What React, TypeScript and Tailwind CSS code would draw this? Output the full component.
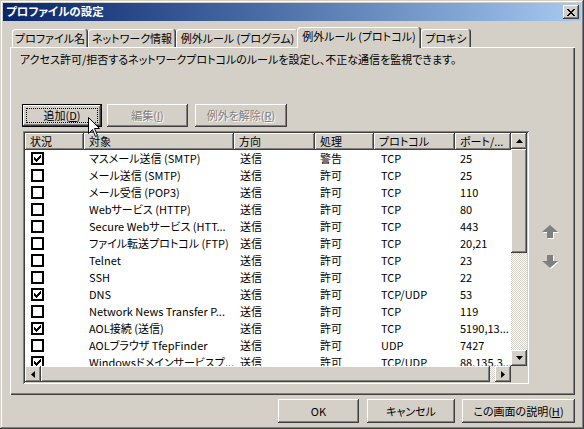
import React from 'react';

const raised =
  'shadow-[inset_-1px_-1px_0_#404040,inset_1px_1px_0_#ffffff,inset_-2px_-2px_0_#808080,inset_2px_2px_0_#d4d0c8]';
const headerCell = 'shadow-[inset_-1px_-1px_0_#404040,inset_1px_1px_0_#ffffff,inset_-2px_-2px_0_#808080]';
const sunken =
  'shadow-[inset_1px_1px_0_#808080,inset_-1px_-1px_0_#ffffff,inset_2px_2px_0_#404040,inset_-2px_-2px_0_#d4d0c8]';
const dither = 'bg-[repeating-conic-gradient(#ffffff_0_25%,#d4d0c8_0_50%)] bg-[length:2px_2px]';
const disabled = 'text-[#808080] [text-shadow:1px_1px_0_#ffffff]';
const tabShadow = 'shadow-[inset_-1px_0_0_#404040,inset_1px_1px_0_#ffffff,inset_-2px_0_0_#808080]';

type Row = { on: boolean; name: string; dir: string; act: string; proto: string; port: string };

const rows: Row[] = [
  { on: true, name: 'マスメール送信 (SMTP)', dir: '送信', act: '警告', proto: 'TCP', port: '25' },
  { on: false, name: 'メール送信 (SMTP)', dir: '送信', act: '許可', proto: 'TCP', port: '25' },
  { on: false, name: 'メール受信 (POP3)', dir: '送信', act: '許可', proto: 'TCP', port: '110' },
  { on: false, name: 'Webサービス (HTTP)', dir: '送信', act: '許可', proto: 'TCP', port: '80' },
  { on: false, name: 'Secure Webサービス (HTT...', dir: '送信', act: '許可', proto: 'TCP', port: '443' },
  { on: false, name: 'ファイル転送プロトコル (FTP)', dir: '送信', act: '許可', proto: 'TCP', port: '20,21' },
  { on: false, name: 'Telnet', dir: '送信', act: '許可', proto: 'TCP', port: '23' },
  { on: false, name: 'SSH', dir: '送信', act: '許可', proto: 'TCP', port: '22' },
  { on: true, name: 'DNS', dir: '送信', act: '許可', proto: 'TCP/UDP', port: '53' },
  { on: false, name: 'Network News Transfer P...', dir: '送信', act: '許可', proto: 'TCP', port: '119' },
  { on: true, name: 'AOL接続 (送信)', dir: '送信', act: '許可', proto: 'TCP', port: '5190,13...' },
  { on: false, name: 'AOLブラウザ TfepFinder', dir: '送信', act: '許可', proto: 'UDP', port: '7427' },
  { on: true, name: 'Windowsドメインサービスプ...', dir: '送信', act: '許可', proto: 'TCP/UDP', port: '88,135,3...' },
];

const cols = [
  { label: '状況', w: 'w-[59px]' },
  { label: '対象', w: 'w-[150px]' },
  { label: '方向', w: 'w-[81px]' },
  { label: '処理', w: 'w-[59px]' },
  { label: 'プロトコル', w: 'w-[81px]' },
  { label: 'ポート/...', w: 'w-[56px]' },
];

function Check({ on }: { on: boolean }) {
  return (
    <div className="w-[13px] h-[13px] border-2 border-black bg-white flex items-center justify-center">
      {on && (
        <svg width="7" height="7" viewBox="0 0 7 7" shapeRendering="crispEdges">
          <rect x="0" y="2" width="1" height="3" fill="#000" />
          <rect x="1" y="3" width="1" height="3" fill="#000" />
          <rect x="2" y="4" width="1" height="3" fill="#000" />
          <rect x="3" y="3" width="1" height="3" fill="#000" />
          <rect x="4" y="2" width="1" height="3" fill="#000" />
          <rect x="5" y="1" width="1" height="3" fill="#000" />
          <rect x="6" y="0" width="1" height="3" fill="#000" />
        </svg>
      )}
    </div>
  );
}

function Arrow({ dir }: { dir: 'up' | 'down' | 'left' | 'right' }) {
  const pts = {
    up: '0,4 3.5,0 7,4',
    down: '0,0 3.5,4 7,0',
    left: '4,0 0,3.5 4,7',
    right: '0,0 4,3.5 0,7',
  }[dir];
  const vertical = dir === 'up' || dir === 'down';
  return (
    <svg width={vertical ? 7 : 4} height={vertical ? 4 : 7} viewBox={vertical ? '0 0 7 4' : '0 0 4 7'}>
      <polygon points={pts} fill="#000" />
    </svg>
  );
}

function ScrollBtn({ dir }: { dir: 'up' | 'down' | 'left' | 'right' }) {
  return (
    <div className={`w-[16px] h-[16px] shrink-0 bg-[#d4d0c8] flex items-center justify-center ${raised}`}>
      <Arrow dir={dir} />
    </div>
  );
}

function Button({
  children,
  w,
  off,
  focused,
}: {
  children: React.ReactNode;
  w: string;
  off?: boolean;
  focused?: boolean;
}) {
  if (focused) {
    return (
      <div className={`${w} h-full border border-black`}>
        <div className={`w-full h-full bg-[#d4d0c8] p-[3px] ${raised}`}>
          <div className="w-full h-full border border-dotted border-black flex items-center justify-center">
            {children}
          </div>
        </div>
      </div>
    );
  }
  return (
    <div className={`${w} h-full bg-[#d4d0c8] flex items-center justify-center ${raised} ${off ? disabled : ''}`}>
      {children}
    </div>
  );
}

function MoveArrow({ up }: { up: boolean }) {
  const pts = up ? '8,0 16,7 11,7 11,13 5,13 5,7 0,7' : '5,0 11,0 11,6 16,6 8,13 0,6 5,6';
  return (
    <svg width="18" height="15" viewBox="0 0 18 15">
      <polygon points={pts} fill="#ffffff" transform="translate(1 1)" />
      <polygon points={pts} fill="#808080" />
    </svg>
  );
}

export default function App() {
  return (
    <div
      className={`relative w-[584px] h-[429px] overflow-hidden bg-[#d4d0c8] p-[3px] text-[11px] text-black font-['Noto_Sans_CJK_JP','Noto_Sans',sans-serif] [font-feature-settings:'palt'] shadow-[inset_-1px_-1px_0_#404040,inset_1px_1px_0_#d4d0c8,inset_-2px_-2px_0_#808080,inset_2px_2px_0_#ffffff]`}
    >
      {/* title bar */}
      <div className="h-[18px] flex items-center bg-linear-to-r from-[#0a246a] to-[#a6caf0] pl-[3px] pr-[2px]">
        <span className="text-white font-bold text-[11.5px] leading-none">プロファイルの設定</span>
        <div className={`ml-auto w-[16px] h-[14px] bg-[#d4d0c8] flex items-center justify-center ${raised}`}>
          <svg width="8" height="7" viewBox="0 0 8 7" shapeRendering="crispEdges">
            <path d="M0 0h2v1h-2zM6 0h2v1h-2zM1 1h2v1h-2zM5 1h2v1h-2zM2 2h4v1h-4zM3 3h2v1h-2zM2 4h4v1h-4zM1 5h2v1h-2zM5 5h2v1h-2zM0 6h2v1h-2zM6 6h2v1h-2z" fill="#000" />
          </svg>
        </div>
      </div>

      <div className="px-[7px]">
        {/* tabs */}
        <div className="mt-[6px] h-[20px] flex items-end pl-[2px]">
          {[
            { label: 'プロファイル名', w: 'w-[76px]' },
            { label: 'ネットワーク情報', w: 'w-[88px]' },
            { label: '例外ルール (プログラム)', w: 'w-[123px]' },
          ].map((t) => (
            <div
              key={t.label}
              className={`${t.w} h-[18px] rounded-t-[3px] flex items-center justify-center whitespace-nowrap leading-none pt-[1px] ${tabShadow}`}
            >
              {t.label}
            </div>
          ))}
          <div className={`relative z-10 -ml-[2px] -mb-[1px] w-[124px] h-[21px] bg-[#d4d0c8] rounded-t-[3px] flex items-center justify-center whitespace-nowrap leading-none pb-[3px] ${tabShadow}`}>
            例外ルール (プロトコル)
          </div>
          <div className={`w-[50px] h-[18px] rounded-t-[3px] flex items-center justify-center whitespace-nowrap leading-none pt-[1px] ${tabShadow}`}>
            プロキシ
          </div>
        </div>

        {/* panel */}
        <div className="w-[565px] h-[348px] pl-[12px] pt-[1px] shadow-[inset_1px_1px_0_#ffffff,inset_-1px_-1px_0_#404040,inset_-2px_-2px_0_#808080]">
          <div className="-ml-[2px] mt-[4px] leading-[14px] whitespace-nowrap">
            アクセス許可/拒否するネットワークプロトコルのルールを設定し、不正な通信を監視できます。
          </div>

          <div className="mt-[38px] h-[23px] flex">
            <Button w="w-[80px]" focused>
              追加(<u>D</u>)
            </Button>
            <div className="ml-[5px] h-full">
              <Button w="w-[81px]" off>
                編集(<u>I</u>)
              </Button>
            </div>
            <div className="ml-[7px] h-full">
              <Button w="w-[92px]" off>
                例外を解除(<u>R</u>)
              </Button>
            </div>
          </div>

          <div className="mt-[4px] flex">
            {/* list view */}
            <div className={`ml-[1px] w-[506px] h-[253px] bg-white p-[2px] ${sunken}`}>
              <div className="flex h-[233px]">
                <div className="w-[486px] h-full overflow-hidden">
                  <div className="flex h-[17px] bg-[#d4d0c8]">
                    {cols.map((c) => (
                      <div
                        key={c.label}
                        className={`${c.w} shrink-0 h-full pl-[5px] leading-[16px] whitespace-nowrap overflow-hidden ${headerCell}`}
                      >
                        {c.label}
                      </div>
                    ))}
                  </div>
                  {rows.map((r, i) => (
                    <div key={i} className="flex h-[17px] leading-[17px] whitespace-nowrap">
                      <div className="w-[59px] shrink-0 pl-[6px] flex items-center">
                        <Check on={r.on} />
                      </div>
                      <div className="w-[150px] shrink-0 pl-[5px] overflow-hidden">{r.name}</div>
                      <div className="w-[81px] shrink-0 pl-[6px]">{r.dir}</div>
                      <div className="w-[59px] shrink-0 pl-[5px]">{r.act}</div>
                      <div className="w-[81px] shrink-0 pl-[7px]">{r.proto}</div>
                      <div className="w-[56px] shrink-0 pl-[5px] overflow-hidden">{r.port}</div>
                    </div>
                  ))}
                </div>
                {/* vertical scrollbar */}
                <div className="w-[16px] h-full flex flex-col">
                  <ScrollBtn dir="up" />
                  <div className={`h-[104px] bg-[#d4d0c8] ${raised}`} />
                  <div className={`flex-1 ${dither}`} />
                  <ScrollBtn dir="down" />
                </div>
              </div>
              {/* horizontal scrollbar */}
              <div className="flex h-[16px]">
                <ScrollBtn dir="left" />
                <div className={`w-[449px] h-full bg-[#d4d0c8] ${raised}`} />
                <div className={`flex-1 ${dither}`} />
                <ScrollBtn dir="right" />
                <div className="w-[16px] h-full bg-[#d4d0c8]" />
              </div>
            </div>

            <div className="ml-[13px] pt-[94px] flex flex-col">
              <MoveArrow up />
              <div className="mt-[15px]">
                <MoveArrow up={false} />
              </div>
            </div>
          </div>
        </div>

        {/* dialog buttons */}
        <div className="mt-[4px] h-[24px] flex justify-end -mr-[1px]">
          <Button w="w-[81px]">OK</Button>
          <div className="ml-[8px] h-full">
            <Button w="w-[88px]">キャンセル</Button>
          </div>
          <div className="ml-[7px] h-full">
            <Button w="w-[113px]">
              この画面の説明(<u>H</u>)
            </Button>
          </div>
        </div>
      </div>

      {/* mouse cursor */}
      <svg className="absolute left-[88px] top-[117px]" width="13" height="21" viewBox="0 0 13 21">
        <polygon points="0.5,0.5 0.5,16.5 4.5,12.5 7.5,19.5 9.5,18.5 6.5,11.5 11.5,11.5" fill="#fff" stroke="#000" strokeWidth="1" />
      </svg>
    </div>
  );
}
